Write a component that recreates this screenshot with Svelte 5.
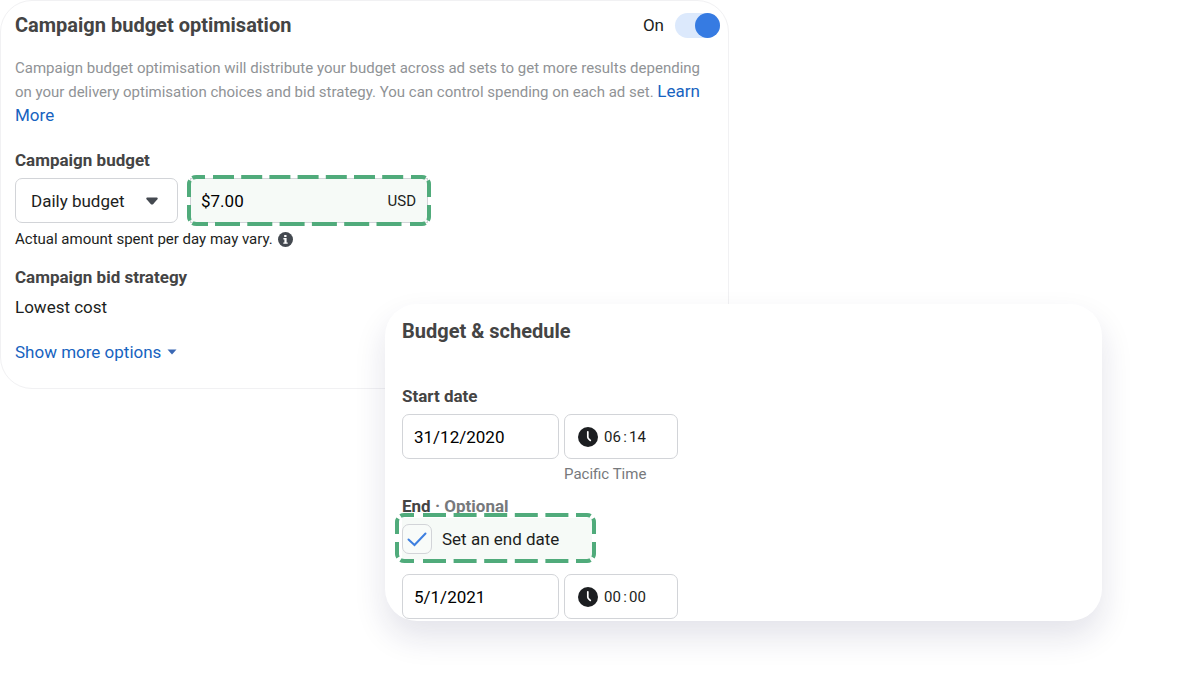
<script lang="ts">
  let optimised = $state(true)
  let budgetType = $state('daily')
  let budget = $state('$7.00')
  let hasEndDate = $state(true)

  let schedule = $state({
    start: { date: '31/12/2020', hour: '06', minute: '14' },
    end: { date: '5/1/2021', hour: '00', minute: '00' },
  })

  type Entry = { date: string; hour: string; minute: string }
</script>

{#snippet dateRow(entry: Entry, name: string)}
  <div class="date-row">
    <input class="field date" type="text" aria-label="{name} date" bind:value={entry.date} />
    <div class="field time">
      <svg class="clock" viewBox="0 0 20 20" aria-hidden="true">
        <circle cx="10" cy="10" r="10" fill="#1c1e21" />
        <path d="M9.800 4.800v5.400c0 1.300 1 1.900 2.500 3.200" fill="none" stroke="#fff" stroke-width="1.700" stroke-linecap="round" />
      </svg>
      <input type="text" aria-label="{name} hour" bind:value={entry.hour} />
      <span class="colon">:</span>
      <input type="text" aria-label="{name} minute" bind:value={entry.minute} />
    </div>
  </div>
{/snippet}

<main class="page">
  <section class="card budget">
    <header class="head">
      <h2>Campaign budget optimisation</h2>
      <label class="switch">
        <span>On</span>
        <input type="checkbox" role="switch" bind:checked={optimised} />
      </label>
    </header>

    <p class="description">
      Campaign budget optimisation will distribute your budget across ad sets to get more results depending on your
      delivery optimisation choices and bid strategy. You can control spending on each ad set. <a href="#learn">Learn More</a>
    </p>

    <label class="label" for="budget-amount">Campaign budget</label>
    <div class="budget-row">
      <div class="select">
        <select class="field" aria-label="Budget type" bind:value={budgetType}>
          <option value="daily">Daily budget</option>
          <option value="lifetime">Lifetime budget</option>
        </select>
        <svg class="caret" viewBox="0 0 12 8" aria-hidden="true">
          <path d="M1.200 .5h9.600c.9 0 1.200 1 .6 1.700L7.300 6.900c-.8.900-1.800.9-2.600 0L.6 2.200C0 1.500.3.5 1.200.5z" fill="#444950" />
        </svg>
      </div>
      <div class="amount">
        <input id="budget-amount" type="text" bind:value={budget} />
        <span class="currency">USD</span>
        <svg class="frame" viewBox="0 0 244 51" aria-hidden="true">
          <path d="M26 2H222" stroke-dasharray="21 7.200" />
          <path d="M28 49H220" stroke-dasharray="25 7.300" />
          <path d="M2 22V9q0-2 1-3.500M5.500 3q1.500-1 4-1H18" />
          <path d="M224 2h11q2 0 3.500 1M241 5.500q1 1.500 1 3.500v13" />
          <path d="M2 30v12q0 2 1 3.500M5.500 48q1.500 1 4 1H21" />
          <path d="M223 49h12q2 0 3.500-1M241 45.500q1-1.500 1-3.500V30" />
        </svg>
      </div>
    </div>
    <p class="hint">
      Actual amount spent per day may vary.
      <svg class="info" viewBox="0 0 15 15" aria-hidden="true">
        <circle cx="7.500" cy="7.500" r="7.500" fill="#444950" />
        <path d="M6.200 3h2.300v2H6.200zM5.400 6.100h3.200v4.300h1.100v1.400H5.300v-1.400h1.100V7.500h-1z" fill="#fff" />
      </svg>
    </p>

    <h3 class="label strategy">Campaign bid strategy</h3>
    <p class="value">Lowest cost</p>

    <button class="more" type="button">
      Show more options
      <svg viewBox="0 0 10 6" aria-hidden="true"><path d="M.5.5h9L5 5.500z" fill="#3b68b4" /></svg>
    </button>
  </section>

  <section class="card schedule">
    <h2>Budget &amp; schedule</h2>

    <h3 class="label start">Start date</h3>
    {@render dateRow(schedule.start, 'Start')}
    <p class="zone">Pacific Time</p>

    <h3 class="label end">End <span>· Optional</span></h3>
    <label class="end-toggle">
      <span class="box">
        <input type="checkbox" bind:checked={hasEndDate} />
        {#if hasEndDate}
          <svg viewBox="0 0 30 30" aria-hidden="true">
            <path d="M6.500 15.500l6 5.500L23.500 9.500" fill="none" stroke="#3d7fe0" stroke-width="2" stroke-linecap="round" />
          </svg>
        {/if}
      </span>
      Set an end date
      <svg class="frame" viewBox="0 0 201 50" aria-hidden="true">
        <path d="M28 2H174" stroke-dasharray="23 7.600" />
        <path d="M28 48H174" stroke-dasharray="23 7.600" />
        <path d="M2 21V9q0-2 1-3.500M5.500 3q1.500-1 4-1H19" />
        <path d="M181 2h11q2 0 3.500 1M198 5.500q1 1.500 1 3.500v12" />
        <path d="M2 29v12q0 2 1 3.500M5.500 47q1.500 1 4 1H19" />
        <path d="M181 48h11q2 0 3.500-1M198 44.500q1-1.500 1-3.500V29" />
      </svg>
    </label>
    {@render dateRow(schedule.end, 'End')}
  </section>
</main>

<style>
  :global(body) { margin: 0; background: #fff; }
  .page { display: grid; grid-template-columns: 385fr 344fr 373fr 98fr; padding-bottom: 64px; font-family: Roboto, 'Liberation Sans', sans-serif; color: #1c1e21; }
  .page * { box-sizing: border-box; }
  h2, h3, p { margin: 0; }
  h2 { font-size: 20px; line-height: 24px; font-weight: 700; color: #444; }
  input, select, button { font-family: inherit; color: inherit; }

  .card { border-radius: 32px; background: #fff; }
  .budget { grid-column: 1 / 3; padding: 12px 8px 24px 14px; border: 1px solid #f1f1f3; }
  .schedule { position: relative; grid-column: 2 / 4; margin-top: -85px; padding: 15px 17px 2px; box-shadow: 0 16px 32px rgba(24, 26, 84, 0.12); }

  .head { display: flex; align-items: flex-start; justify-content: space-between; }
  .switch { display: flex; align-items: flex-start; gap: 11px; font-size: 17px; line-height: 24px; }
  .switch input { appearance: none; display: flex; justify-content: flex-start; width: 45px; height: 25px; margin: 0; border-radius: 13px; background: #dce9fc; }
  .switch input:checked { justify-content: flex-end; }
  .switch input::before { content: ''; width: 25px; height: 25px; border-radius: 50%; background: #367be2; }

  .description { margin-top: 19px; padding-right: 12px; font-size: 15px; line-height: 23px; color: #909396; }
  .description a { font-size: 17px; color: #1763c0; text-decoration: none; }

  .label { display: block; font-size: 17px; line-height: 24px; font-weight: 700; color: #444; }
  .budget > label { margin-top: 20px; }
  .field { height: 45px; border: 1px solid #d2d4d8; border-radius: 7px; background: #fff; font-size: 17px; }

  .budget-row { display: flex; gap: 12px; margin-top: 6px; }
  .select { display: grid; align-items: center; width: 163px; }
  .select > * { grid-area: 1 / 1; }
  .select select { appearance: none; width: 100%; padding: 0 15px; }
  .caret { justify-self: end; width: 12px; height: 8px; margin-right: 20px; pointer-events: none; }
  .amount { position: relative; display: flex; align-items: center; width: 238px; height: 45px; padding: 0 11px 0 10px; border: 1px solid #d2d4d8; background: #f6faf7; }
  .amount input { flex: 1; min-width: 0; padding: 0; border: 0; background: none; font-size: 17px; color: #000; }
  .currency { font-size: 15px; }
  .frame { position: absolute; fill: none; stroke: #50ab7b; stroke-width: 4; pointer-events: none; }
  .amount .frame { top: -4px; left: -4px; width: 244px; height: 51px; }

  .hint { display: flex; align-items: center; gap: 5px; margin-top: 6px; font-size: 15px; line-height: 20px; }
  .info { width: 15px; height: 15px; }
  .strategy { margin-top: 16px; }
  .value { margin-top: 6px; font-size: 17px; line-height: 24px; }
  .more { display: flex; align-items: center; gap: 6px; margin-top: 21px; padding: 0; border: 0; background: none; font-size: 17px; line-height: 24px; color: #1763c0; }
  .more svg { width: 10px; height: 6px; }

  .start { margin-top: 41px; }
  .date-row { display: flex; gap: 5px; margin-top: 6px; }
  .date { width: 157px; padding: 0 11px; color: #000; }
  .time { display: flex; align-items: center; width: 114px; padding: 0 13px; font-size: 15px; }
  .time input { width: 17px; padding: 0; border: 0; background: none; font-size: 15px; }
  .colon { width: 8px; text-align: center; }
  .clock { width: 20px; height: 20px; margin-right: 6px; }
  .zone { margin: 5px 0 0 162px; font-size: 15px; line-height: 20px; color: #77797c; }
  .end { margin-top: 10px; }
  .end span { color: #77797c; }

  .end-toggle { position: relative; display: flex; align-items: center; gap: 10px; width: 190px; height: 42px; font-size: 17px; background: #f6faf7; }
  .end-toggle + :global(.date-row) { margin-top: 14px; }
  .end-toggle .frame { top: -5px; left: -7px; width: 201px; height: 50px; }
  .box { display: grid; width: 30px; height: 30px; }
  .box > * { grid-area: 1 / 1; }
  .box input { appearance: none; width: 30px; height: 30px; margin: 0; border: 1px solid #d2d4d8; border-radius: 7px; background: #f8fbf9; }
  .box svg { width: 30px; height: 30px; pointer-events: none; }
</style>
